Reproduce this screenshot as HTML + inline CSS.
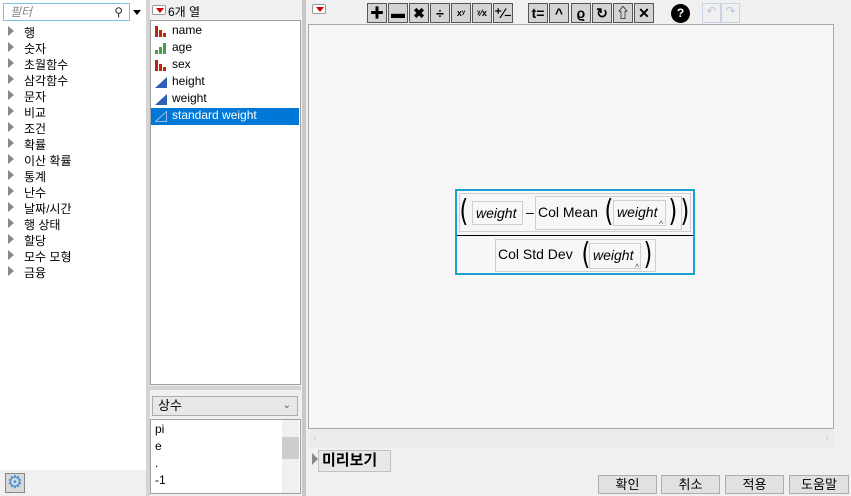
<!DOCTYPE html>
<html><head><meta charset="utf-8"><style>
*{box-sizing:border-box;margin:0;padding:0}
body{width:851px;height:496px;background:#f0f0f0;font-family:"Liberation Sans","Noto Sans CJK KR",sans-serif;font-size:12px;color:#000;position:relative;overflow:hidden}
.a{position:absolute}
.tri{position:absolute;width:0;height:0;border-top:5px solid transparent;border-bottom:5px solid transparent;border-left:6px solid #888}
.tb{position:absolute;top:3px;width:20px;height:20px;background:#d4d4d4;border:1px solid #555;display:flex;align-items:center;justify-content:center;font-weight:bold;font-size:14px}
.btn{position:absolute;top:475px;height:19px;background:#e1e1e1;border:1px solid #adadad;font-size:13px;text-align:center;line-height:17px}
.dd{position:absolute;width:14px;height:10px;border:1px solid #999;background:#fff;border-radius:2px}
.dd:after{content:"";position:absolute;left:3px;top:2px;border-left:4px solid transparent;border-right:4px solid transparent;border-top:5px solid #c00}
.ic{position:absolute;left:155px;width:12px;height:11px}
.fb{position:absolute;border:1px solid #cfcfcf}
.w{position:absolute;border:1px solid #cfcfcf;font-style:italic;font-size:14px;padding-left:3px;line-height:22px}
.t{position:absolute;font-size:14px;white-space:nowrap}
.p{position:absolute;font-size:30px;line-height:30px;font-family:"DejaVu Sans",sans-serif;font-weight:normal;transform:scaleX(.75)}
.car{position:absolute;font-size:9px;font-style:normal;color:#555}
</style></head><body>
<div class="a" style="left:0;top:0;width:146px;height:496px;background:#fff"></div>
<div class="a" style="left:0;top:470px;width:146px;height:26px;background:#f0f0f0"></div>
<div class="a" style="left:3px;top:3px;width:127px;height:18px;border:1px solid #7ec0e8;background:#fff;color:#888;font-style:italic;padding-left:6px;line-height:16px">필터<span style="position:absolute;right:6px;color:#333;font-style:normal">⚲</span></div>
<div class="a" style="left:133px;top:10px;border-left:4px solid transparent;border-right:4px solid transparent;border-top:5px solid #000"></div>
<div class="a" style="left:146px;top:0;width:4px;height:496px;background:#d4d4d4"></div>
<div class="a" style="left:5px;top:473px;width:20px;height:20px;background:#d8d8d8;border:1px solid #888;color:#4a8fd8;font-size:18px;line-height:17px;text-align:center">⚙</div>
<div id="tree"></div>
<div class="dd" style="left:152px;top:5px"></div>
<div class="a" style="left:168px;top:3px;font-size:12px">6개 열</div>
<div class="a" style="left:150px;top:20px;width:151px;height:365px;background:#fff;border:1px solid #a0a0a0"></div>
<div class="a" style="left:151px;top:108px;width:148px;height:17px;background:#0078d7"></div>
<div id="cols"></div>
<div class="a" style="left:150px;top:386px;width:151px;height:4px;background:#d4d4d4"></div>
<div class="a" style="left:152px;top:396px;width:146px;height:20px;border:1px solid #adadad;background:#e8e8e8;font-size:13px;padding-left:5px;line-height:18px">상수<span style="position:absolute;right:6px;font-size:10px;color:#555">⌄</span></div>
<div class="a" style="left:150px;top:419px;width:151px;height:75px;background:#fff;border:1px solid #a0a0a0"></div>
<div class="a" style="left:282px;top:420px;width:17px;height:73px;background:#f0f0f0"></div>
<div class="a" style="left:282px;top:437px;width:17px;height:22px;background:#cdcdcd"></div>
<div class="a" style="left:155px;top:421px;line-height:17px">pi<br>e<br>.<br>-1</div>
<div class="a" style="left:302px;top:0;width:4px;height:496px;background:#c8c8c8"></div>
<div class="dd" style="left:312px;top:4px"></div>
<div id="tb"></div>
<div class="a" style="left:308px;top:24px;width:526px;height:405px;background:#f7f7f7;border:1px solid #a8a8a8"></div>
<div class="a" style="left:455px;top:189px;width:240px;height:86px;border:2px solid #1a9fd4;background:#f7f7f7"></div>
<div class="fb" style="left:459px;top:193px;width:232px;height:39px"></div>
<div class="p" style="left:458px;top:197px">(</div>
<div class="w" style="left:472px;top:201px;width:51px;height:24px">weight</div>
<div class="t" style="left:526px;top:204px">–</div>
<div class="fb" style="left:535px;top:196px;width:147px;height:34px"></div>
<div class="t" style="left:538px;top:204px">Col Mean</div>
<div class="p" style="left:603px;top:197px">(</div>
<div class="w" style="left:613px;top:200px;width:53px;height:26px;line-height:23px">weight<span class="car" style="left:45px;top:12px">^</span></div>
<div class="p" style="left:667px;top:197px">)</div>
<div class="p" style="left:679px;top:197px">)</div>
<div class="a" style="left:457px;top:235px;width:236px;height:1px;background:#000"></div>
<div class="fb" style="left:495px;top:239px;width:161px;height:33px"></div>
<div class="t" style="left:498px;top:246px">Col Std Dev</div>
<div class="p" style="left:580px;top:240px">(</div>
<div class="w" style="left:589px;top:243px;width:52px;height:26px;line-height:23px">weight<span class="car" style="left:45px;top:12px">^</span></div>
<div class="p" style="left:642px;top:240px">)</div>
<div class="a" style="left:308px;top:429px;width:526px;height:19px;background:#ececec;color:#ccc;font-size:11px;padding-left:5px;line-height:19px">‹<span style="position:absolute;right:5px">›</span></div>
<div class="a" style="left:312px;top:453px;border-top:6px solid transparent;border-bottom:6px solid transparent;border-left:6px solid #888"></div>
<div class="a" style="left:318px;top:450px;width:73px;height:22px;background:#e8e8e8;border:1px solid #c0c0c0;font-size:15px;font-weight:bold;line-height:20px;padding-left:3px">미리보기</div>
<div class="btn" style="left:598px;width:59px">확인</div>
<div class="btn" style="left:661px;width:59px">취소</div>
<div class="btn" style="left:725px;width:59px">적용</div>
<div class="btn" style="left:789px;width:60px">도움말</div>
<script>
var t=["행","숫자","초월함수","삼각함수","문자","비교","조건","확률","이산 확률","통계","난수","날짜/시간","행 상태","할당","모수 모형","금융"],h="";
t.forEach(function(s,i){var y=24+i*16;h+='<div class="tri" style="left:8px;top:'+(y+2)+'px"></div><div class="a" style="left:24px;top:'+y+'px;font-size:12px">'+s+'</div>'});
document.getElementById("tree").innerHTML=h;
var c=[["name","n"],["age","o"],["sex","n"],["height","c"],["weight","c"],["standard weight","s"]];h="";
c.forEach(function(a,i){var y=23+i*17;var ic;
if(a[1]=="n")ic='<svg class="ic" style="top:'+(y+3)+'px" viewBox="0 0 12 11"><rect x="0" y="0" width="3" height="11" fill="#c0260e"/><rect x="4" y="4" width="3" height="7" fill="#c0260e"/><rect x="8" y="7" width="3" height="4" fill="#c0260e"/></svg>';
else if(a[1]=="o")ic='<svg class="ic" style="top:'+(y+3)+'px" viewBox="0 0 12 11"><rect x="0" y="7" width="3" height="4" fill="#4aa04a"/><rect x="4" y="4" width="3" height="7" fill="#4aa04a"/><rect x="8" y="0" width="3" height="11" fill="#4aa04a"/></svg>';
else if(a[1]=="c")ic='<svg class="ic" style="top:'+(y+3)+'px" viewBox="0 0 12 11"><polygon points="0,11 12,0 12,11" fill="#2f5fb0"/></svg>';
else ic='<svg class="ic" style="top:'+(y+3)+'px" viewBox="0 0 12 11"><polygon points="0.5,10.5 11.5,0.5 11.5,10.5" fill="none" stroke="#9bb7e0"/></svg>';
h+=ic+'<div class="a" style="left:172px;top:'+y+'px;'+(i==5?'color:#fff':'')+'">'+a[0]+'</div>'});
document.getElementById("cols").innerHTML=h;
var b=[[367,"✚"],[388,"▬"],[409,"✖"],[430,"÷"],[451,"<small style=font-size:9px>xʸ</small>"],[472,"<small style=font-size:9px>ʸ⁄x</small>"],[493,"⁺⁄₋"],[528,"t="],[549,"^"],[571,"ϱ"],[592,"↻"],[613,"⇧"],[634,"✕"]];h="";
b.forEach(function(a){h+='<div class="tb" style="left:'+a[0]+'px">'+a[1]+'</div>'});
h+='<div class="a" style="left:671px;top:4px;width:19px;height:19px;border-radius:50%;background:#000;color:#fff;font-weight:bold;text-align:center;line-height:19px">?</div>';
h+='<div class="a" style="left:702px;top:3px;width:19px;height:20px;border:1px solid #c8d4e4;color:#b8c8dc;text-align:center">↶</div><div class="a" style="left:721px;top:3px;width:19px;height:20px;border:1px solid #c8d4e4;color:#b8c8dc;text-align:center">↷</div>';
document.getElementById("tb").innerHTML=h;
</script>
</body></html>
